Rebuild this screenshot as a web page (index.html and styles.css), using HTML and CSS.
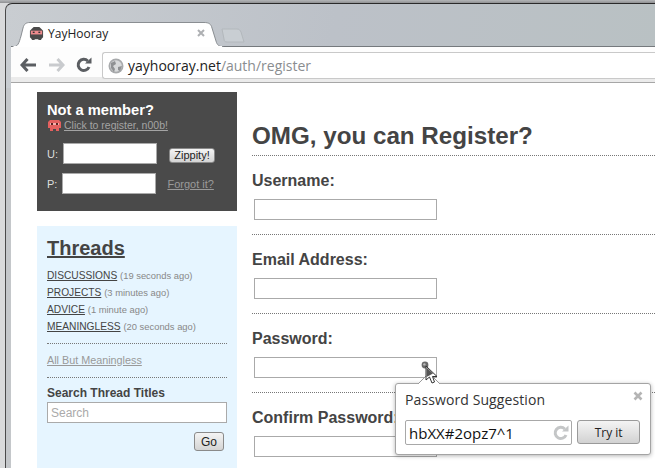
FILE: index.html
```html
<!DOCTYPE html>
<html lang="en">
<head>
<meta charset="utf-8">
<title>YayHooray</title>
<link rel="stylesheet" href="styles.css">
</head>
<body>
<div class="window">
  <div class="frame">
    <div class="tabstrip">
      <div class="tab">
        <svg class="tab-shape" width="212" height="25" viewBox="0 0 212 25"><path d="M0.5 25 C6 25 7 21 9 14 L11 6 C12 2 14 0.5 18 0.5 L192 0.5 C197 0.5 199 2 200 6 L204 19 C205 23 207 24.5 211.5 25 Z" fill="#fff" stroke="#8a8e92"/><path d="M1.5 25 H210" stroke="#fff" stroke-width="2"/></svg>
        <svg class="favicon" width="15" height="15" viewBox="0 0 16 16"><path d="M3 3 L5 1 H11 L13 3 L15 5 V12 L13 14 V15 H10 V14 H6 V15 H3 V14 L1 12 V5 Z" fill="#4a4a4a"/><rect x="2" y="5" width="12" height="4" fill="#ee8b8e"/><rect x="4" y="6" width="2" height="1.5" fill="#333"/><rect x="10" y="6" width="2" height="1.5" fill="#333"/></svg>
        <span class="tab-title">YayHooray</span>
        <svg class="tab-close" width="10" height="10" viewBox="0 0 10 10"><path d="M2 2 L8 8 M8 2 L2 8" stroke="#aeb0b3" stroke-width="2"/></svg>
      </div>
      <svg class="newtab" width="24" height="15" viewBox="0 0 24 15"><path d="M1 1 H16 C18 1 19 2 20 4 L23 14 H6 C4 14 3 13 3 11 Z" fill="#c9ced3" stroke="#b3b8bc"/></svg>
    </div>
    <div class="toolbar">
      <div class="navbtns">
        <svg width="17" height="14" viewBox="0 0 17 14"><path d="M7.5 1 L2 7 L7.5 13 M2.5 7 H16" fill="none" stroke="#5b5e62" stroke-width="3"/></svg>
        <svg width="17" height="14" viewBox="0 0 17 14"><path d="M9.5 1 L15 7 L9.5 13 M14.5 7 H1" fill="none" stroke="#c9cbce" stroke-width="3"/></svg>
        <svg width="16" height="16" viewBox="0 0 16 16"><path d="M13 10 A5.6 5.6 0 1 1 11.8 4" fill="none" stroke="#5b5e62" stroke-width="3"/><path d="M9 6.5 H15.5 V0.5 Z" fill="#5b5e62"/></svg>
      </div>
      <div class="omnibox">
        <svg class="globe" width="16" height="16" viewBox="0 0 16 16"><circle cx="8" cy="8" r="7.5" fill="#a8aaac"/><circle cx="8" cy="8" r="5.8" fill="#d8dadb"/><path d="M3 5 L7 3 L8 6 L5 8 L7 11 L6 14 L3 10 Z M10 9 L14 8 L12 13 L10 12 Z" fill="#8f9193"/></svg>
        <span class="url"><span class="url-host">yayhooray.net</span><span class="url-path">/auth/register</span></span>
      </div>
    </div>
    <div class="page">
      <aside class="sidebar">
        <section class="login">
          <h2 class="login-title">Not a member?</h2>
          <div class="register">
            <svg width="15" height="13" viewBox="0 0 15 13"><path d="M3 1 H12 L14 3 V9 H12 V12 H9 V10 H6 V12 H3 V9 H1 V3 Z" fill="#e4605f"/><rect x="3" y="4" width="9" height="2" fill="#f3b0ae"/><rect x="4" y="4" width="2" height="2" fill="#5a2222"/><rect x="9" y="4" width="2" height="2" fill="#5a2222"/></svg>
            <a class="register-link" href="#">Click to register, n00b!</a>
          </div>
          <div class="login-row row-u">
            <label class="login-label">U:</label>
            <input class="login-input" type="text">
            <button class="btn btn-zip">Zippity!</button>
          </div>
          <div class="login-row row-p">
            <label class="login-label">P:</label>
            <input class="login-input" type="text">
            <a class="forgot" href="#">Forgot it?</a>
          </div>
        </section>
        <section class="threads">
          <h2 class="threads-title">Threads</h2>
          <ul class="thread-list">
            <li><a href="#">DISCUSSIONS</a> <span>(19 seconds ago)</span></li>
            <li><a href="#">PROJECTS</a> <span>(3 minutes ago)</span></li>
            <li><a href="#">ADVICE</a> <span>(1 minute ago)</span></li>
            <li><a href="#">MEANINGLESS</a> <span>(20 seconds ago)</span></li>
          </ul>
          <div class="all-but"><a href="#">All But Meaningless</a></div>
          <div class="search">
            <label class="search-label">Search Thread Titles</label>
            <input class="search-input" type="text" placeholder="Search">
            <div class="search-go"><button class="btn btn-go">Go</button></div>
          </div>
        </section>
      </aside>
      <main class="main">
        <h1 class="heading">OMG, you can Register?</h1>
        <div class="field"><label>Username:</label><input type="text"></div>
        <div class="field"><label>Email Address:</label><input type="text"></div>
        <div class="field"><label>Password:</label><input type="text"></div>
        <div class="field"><label>Confirm Password:</label><input type="text"></div>
      </main>
    </div>
  </div>
  <svg class="keyicon" width="12" height="14" viewBox="0 0 12 14"><path d="M4 4 L10 13" stroke="#666" stroke-width="1.6"/><circle cx="4" cy="4" r="3.4" fill="#6b6b6b"/><circle cx="3.4" cy="3.4" r="1.2" fill="#bbb"/></svg>
  <div class="popup">
    <svg class="popup-arrow" width="22" height="11" viewBox="0 0 22 11"><path d="M0 11 L11 0 L22 11" fill="#fff" stroke="#9a9a9a"/></svg>
    <svg class="popup-close" width="10" height="10" viewBox="0 0 10 10"><path d="M1.5 1.5 L8.5 8.5 M8.5 1.5 L1.5 8.5" stroke="#b4b4b4" stroke-width="2.6"/></svg>
    <div class="popup-title">Password Suggestion</div>
    <div class="popup-row">
      <div class="popup-field">
        <span>hbXX#2opz7^1</span>
        <svg width="16" height="16" viewBox="0 0 16 16"><path d="M13 10 A5.6 5.6 0 1 1 11.8 4" fill="none" stroke="#c4c6c7" stroke-width="3"/><path d="M9 6.5 H15.5 V0.5 Z" fill="#c4c6c7"/></svg>
      </div>
      <button class="popup-btn">Try it</button>
    </div>
  </div>
  <svg class="cursor" width="16" height="22" viewBox="0 0 16 22"><path d="M1 1 L1 15 L4.5 12 L7 18 L9.5 17 L7.5 11.5 L12 11.5 Z" fill="#fff" stroke="#333" stroke-width="1"/><path d="M1.5 2.5 L1.5 12 L8 8.5 Z" fill="#555"/></svg>
</div>
</body>
</html>
```
FILE: styles.css
```css
* { box-sizing: border-box; }
html, body { margin: 0; padding: 0; }
body { font-family: "Liberation Sans", Arial, sans-serif; color: #444; }
a { color: inherit; }

.window {
  position: relative;
  width: 655px;
  height: 468px;
  overflow: hidden;
  padding: 3px 0 0 5px;
  background: linear-gradient(#b4b6b8, #8f9092 3px, #d9dadb 3px);
}
.frame {
  height: 465px;
  display: flex;
  flex-direction: column;
  padding-left: 5px;
  border-top: 1px solid #2a2a2a;
  border-left: 1px solid #4a4a4a;
  border-top-left-radius: 7px;
  background: linear-gradient(100deg, #c9cdd1 0, #bcc1c8 50%, #b9c1c3 100%);
  background-size: 100% 84px;
  background-repeat: no-repeat;
  background-color: #c4c7ca;
}

/* tab strip */
.tabstrip {
  height: 43px;
  flex: none;
  display: flex;
  align-items: flex-end;
  padding-left: 1px;
  border-bottom: 1px solid #75797d;
}
.tab {
  position: relative;
  width: 212px;
  height: 25px;
  margin-bottom: -1px;
  display: flex;
  align-items: center;
  padding: 0 18px 3px 17px;
  gap: 4px;
  z-index: 1;
}
.tab-shape { position: absolute; left: 0; top: 0; }
.favicon { position: relative; flex: none; }
.tab-title {
  position: relative;
  flex: 1;
  font: 12px "Open Sans", sans-serif;
  color: #222;
}
.tab-close { position: relative; flex: none; }
.newtab { margin: 0 0 3px -3px; }

/* toolbar */
.toolbar {
  height: 36px;
  flex: none;
  display: flex;
  align-items: flex-start;
  padding-top: 5px;
  padding-left: 9px;
  background: #fdfdfd;
  border-bottom: 1px solid #a6a6a6;
  box-shadow: inset 0 -5px 0 #ebebeb;
}
.navbtns {
  width: 82px;
  height: 26px;
  flex: none;
  display: flex;
  align-items: center;
  gap: 11px;
}
.omnibox {
  flex: 1;
  height: 27px;
  display: flex;
  align-items: center;
  gap: 4px;
  padding-left: 5px;
  background: #fff;
  border: 1px solid #c9c9c9;
  border-right: 0;
  border-radius: 3px 0 0 3px;
}
.url { font: 14px "Open Sans", sans-serif; }
.url-host { color: #222; }
.url-path { color: #8a8d90; }

/* page */
.page {
  flex: 1;
  display: flex;
  padding: 9px 0 0 26px;
  background: #fff;
  min-height: 0;
}
.sidebar { width: 200px; flex: none; }
.login {
  height: 119px;
  padding: 10px 10px 0;
  background: #4a4a4a;
  color: #e8e8e8;
}
.login-title {
  margin: 0;
  font-size: 14.7px;
  line-height: 16px;
  color: #fff;
}
.register {
  display: flex;
  align-items: center;
  gap: 2px;
  height: 14px;
}
.register-link { font-size: 10.5px; color: #a4a4a4; }
.login-row { display: flex; align-items: center; }
.row-u { margin-top: 11px; }
.row-p { margin-top: 9px; }
.login-label { font-size: 11px; color: #ddd; }
.login-input {
  width: 94px;
  height: 21px;
  padding: 0;
  background: #fff;
  border: 1px solid #aaa;
}
.row-u .login-input { margin: 0 12px 0 5px; }
.row-p .login-input { margin: 0 11px 0 5px; }
.forgot { font-size: 11px; color: #9a9a9a; }
.btn {
  padding: 0;
  font: 11px "Liberation Sans", Arial, sans-serif;
  color: #222;
  background: linear-gradient(#f4f4f4, #d4d4d4);
  border: 1px solid #8a8a8a;
  border-radius: 3px;
}
.btn-zip { width: 46px; height: 15px; margin-top: 3px; line-height: 12px; }

.threads {
  height: 250px;
  margin-top: 15px;
  padding: 11px 10px 0;
  background: #e6f5ff;
}
.threads-title {
  margin: 0;
  font-size: 20px;
  line-height: 22px;
  text-decoration: underline;
  color: #444;
}
.thread-list {
  margin: 8px 0 0;
  padding: 0 0 8px;
  list-style: none;
  border-bottom: 1px dotted #777;
  font-size: 10.2px;
}
.thread-list li { height: 17px; line-height: 17px; white-space: nowrap; }
.thread-list span { font-size: 9.4px; color: #888; }
.all-but {
  height: 34px;
  line-height: 32px;
  font-size: 10.8px;
  color: #999;
  border-bottom: 1px dotted #777;
}
.search { display: flex; flex-direction: column; }
.search-label {
  margin-top: 8px;
  font-size: 12px;
  line-height: 14px;
  font-weight: bold;
  color: #444;
}
.search-input {
  width: 180px;
  height: 21px;
  margin-top: 2px;
  padding: 0 3px;
  font: 12px "Liberation Sans", Arial, sans-serif;
  background: #fff;
  border: 1px solid #aaa;
}
.search-input::placeholder { color: #aaa; opacity: 1; }
.search-go { display: flex; justify-content: flex-end; padding: 9px 3px 0 0; }
.btn-go { width: 30px; height: 19px; font-size: 12px; }

/* main */
.main { flex: 1; min-width: 0; padding-left: 15px; }
.heading {
  height: 64px;
  margin: 0;
  padding-top: 30px;
  font-size: 24.2px;
  line-height: 28px;
  white-space: nowrap;
  color: #444;
  border-bottom: 1px dotted #777;
}
.field {
  height: 79px;
  padding-top: 15px;
  border-bottom: 1px dotted #777;
}
.field label {
  display: block;
  font-size: 16px;
  line-height: 20px;
  font-weight: bold;
  white-space: nowrap;
  color: #444;
}
.field input {
  display: block;
  width: 183px;
  height: 21px;
  margin: 8px 0 0 2px;
  padding: 0;
  background: #fff;
  border: 1px solid #aaa;
}

/* overlays */
.keyicon { position: absolute; left: 421px; top: 361px; }
.cursor { position: absolute; left: 425px; top: 365px; }
.popup {
  position: absolute;
  left: 395px;
  top: 383px;
  width: 256px;
  height: 72px;
  padding: 6px 10px 0 9px;
  background: #fff;
  border: 1px solid #a4a4a4;
  border-radius: 3px;
  box-shadow: 0 1px 4px rgba(0, 0, 0, 0.3);
}
.popup-arrow { position: absolute; left: 22px; top: -11px; }
.popup-close { position: absolute; right: 7px; top: 7px; }
.popup-title {
  font: 14px/20px "Open Sans", sans-serif;
  letter-spacing: 0.1px;
  color: #333;
}
.popup-row { display: flex; gap: 5px; margin-top: 10px; }
.popup-field {
  width: 168px;
  height: 25px;
  display: flex;
  align-items: center;
  justify-content: space-between;
  padding: 0 2px 0 3px;
  font: 15px "Open Sans", sans-serif;
  color: #111;
  border: 1px solid #a8a8a8;
  border-radius: 2px;
}
.popup-btn {
  width: 63px;
  height: 24px;
  padding: 0;
  font: 12px "Open Sans", sans-serif;
  color: #222;
  background: linear-gradient(#f4f4f4, #d2d2d2);
  border: 1px solid #9a9a9a;
  border-radius: 3px;
}
```
